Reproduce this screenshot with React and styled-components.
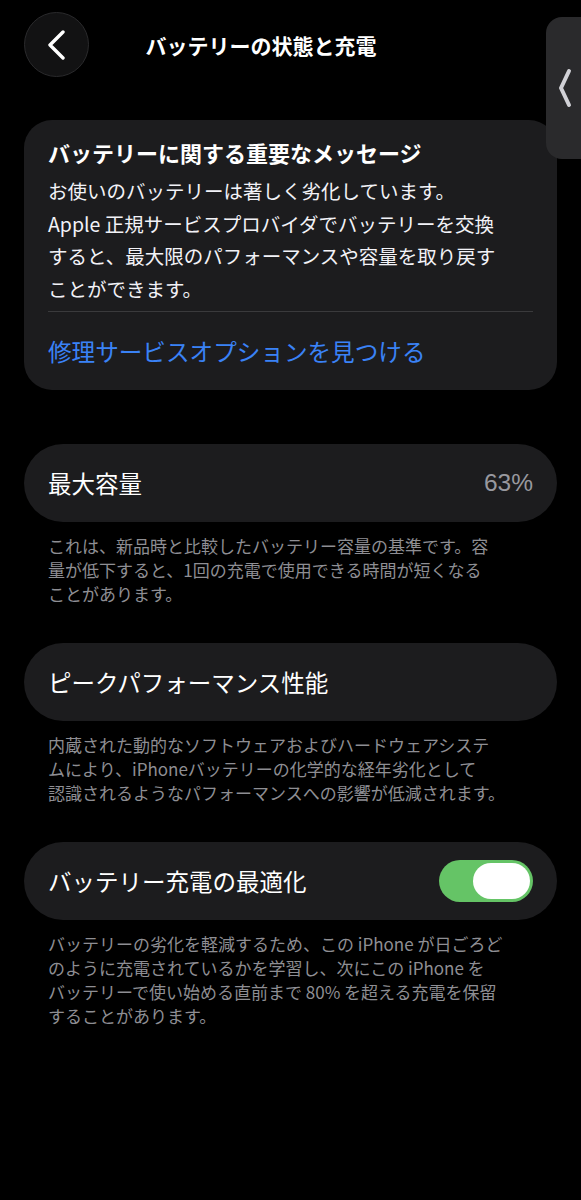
import React from 'react';
import styled, {createGlobalStyle} from 'styled-components';

const GlobalStyle = createGlobalStyle`
  html, body {
    margin: 0;
    padding: 0;
    background: #000;
  }
  body {
    font-family: "Noto Sans CJK JP", "Noto Sans", sans-serif;
    color: #fff;
    -webkit-font-smoothing: antialiased;
  }
`;

const Page = styled.div`
  position: relative;
  min-height: 1200px;
  background: #000;
`;

const Header = styled.header`
  display: grid;
  grid-template-columns: 65px 1fr 124px;
  align-items: center;
  height: 90px;
  padding: 0 24px;
  box-sizing: border-box;
`;

const BackButton = styled.button`
  width: 65px;
  height: 65px;
  border-radius: 50%;
  background: #121213;
  border: 1px solid #2a2a2c;
  display: flex;
  align-items: center;
  justify-content: center;
  padding: 0;
  margin-top: -1px;
`;

const Title = styled.h1`
  margin: 0;
  text-align: center;
  font-size: 21px;
  font-weight: 600;
  color: #fff;
`;

const SideTab = styled.div`
  position: absolute;
  top: 17px;
  right: 0;
  width: 35px;
  height: 142px;
  background: #2a2a2c;
  border-radius: 16px 0 0 16px;
  display: flex;
  align-items: center;
  justify-content: center;
  padding-left: 2px;
  box-sizing: border-box;
`;

const Content = styled.main`
  padding: 30px 24px 0;
`;

const MessageCard = styled.section`
  background: #1c1c1e;
  border-radius: 28px;
  padding: 16px 24px 19px;
`;

const CardTitle = styled.h2`
  margin: 0;
  font-size: 22px;
  line-height: 32px;
  font-weight: 700;
`;

const CardBody = styled.p`
  margin: 7px 0 0;
  font-size: 19.5px;
  line-height: 32.5px;
  white-space: nowrap;
  color: #f2f2f7;
`;

const Divider = styled.hr`
  margin: 6px 0 0;
  border: none;
  height: 1px;
  background: #3a3a3c;
`;

const CardLink = styled.a`
  display: block;
  margin-top: 19px;
  font-size: 23.6px;
  line-height: 40px;
  color: #3a82f6;
  text-decoration: none;
`;

const Row = styled.div`
  margin-top: ${p => p.$gap}px;
  height: 78px;
  border-radius: 39px;
  background: #1c1c1e;
  display: flex;
  align-items: center;
  justify-content: space-between;
  padding: 0 24px;
  box-sizing: border-box;
`;

const RowLabel = styled.span`
  font-size: 23.5px;
  color: #fff;
`;

const RowValue = styled.span`
  font-family: "Liberation Sans", "Noto Sans", sans-serif;
  font-size: 24.5px;
  color: #98989f;
`;

const Footnote = styled.p`
  margin: 12px 0 0;
  padding: 0 24px;
  font-size: 17px;
  line-height: 24px;
  color: #8e8e93;
  white-space: nowrap;
`;

const Toggle = styled.div`
  width: 94px;
  height: 42px;
  border-radius: 21px;
  background: ${p => (p.$on ? '#65c466' : '#39393d')};
  display: flex;
  align-items: center;
  justify-content: ${p => (p.$on ? 'flex-end' : 'flex-start')};
  padding: 0 3px;
  box-sizing: border-box;
`;

const Knob = styled.div`
  width: 57px;
  height: 36px;
  border-radius: 18px;
  background: #fff;
`;

const App = () => (
  <Page>
    <GlobalStyle />
    <Header>
      <BackButton aria-label="戻る">
        <svg width="20" height="30" viewBox="0 0 20 30" fill="none">
          <path d="M16 2 L3 15 L16 28" stroke="#fff" strokeWidth="3.4" strokeLinecap="round" strokeLinejoin="round" />
        </svg>
      </BackButton>
      <Title>バッテリーの状態と充電</Title>
      <span />
    </Header>
    <SideTab>
      <svg width="14" height="40" viewBox="0 0 14 40" fill="none">
        <path d="M11 3 L3 20 L11 37" stroke="#d1d1d6" strokeWidth="4" strokeLinecap="round" strokeLinejoin="round" />
      </svg>
    </SideTab>

    <Content>
      <MessageCard>
        <CardTitle>バッテリーに関する重要なメッセージ</CardTitle>
        <CardBody>
          お使いのバッテリーは著しく劣化しています。
          <br />
          Apple 正規サービスプロバイダでバッテリーを交換
          <br />
          すると、最大限のパフォーマンスや容量を取り戻す
          <br />
          ことができます。
        </CardBody>
        <Divider />
        <CardLink href="#">修理サービスオプションを見つける</CardLink>
      </MessageCard>

      <Row $gap={54}>
        <RowLabel>最大容量</RowLabel>
        <RowValue>63%</RowValue>
      </Row>
      <Footnote>
        これは、新品時と比較したバッテリー容量の基準です。容
        <br />
        量が低下すると、1回の充電で使用できる時間が短くなる
        <br />
        ことがあります。
      </Footnote>

      <Row $gap={37}>
        <RowLabel>ピークパフォーマンス性能</RowLabel>
      </Row>
      <Footnote>
        内蔵された動的なソフトウェアおよびハードウェアシステ
        <br />
        ムにより、iPhoneバッテリーの化学的な経年劣化として
        <br />
        認識されるようなパフォーマンスへの影響が低減されます。
      </Footnote>

      <Row $gap={37}>
        <RowLabel>バッテリー充電の最適化</RowLabel>
        <Toggle $on>
          <Knob />
        </Toggle>
      </Row>
      <Footnote>
        バッテリーの劣化を軽減するため、この iPhone が日ごろど
        <br />
        のように充電されているかを学習し、次にこの iPhone を
        <br />
        バッテリーで使い始める直前まで 80% を超える充電を保留
        <br />
        することがあります。
      </Footnote>
    </Content>
  </Page>
);

export default App;
